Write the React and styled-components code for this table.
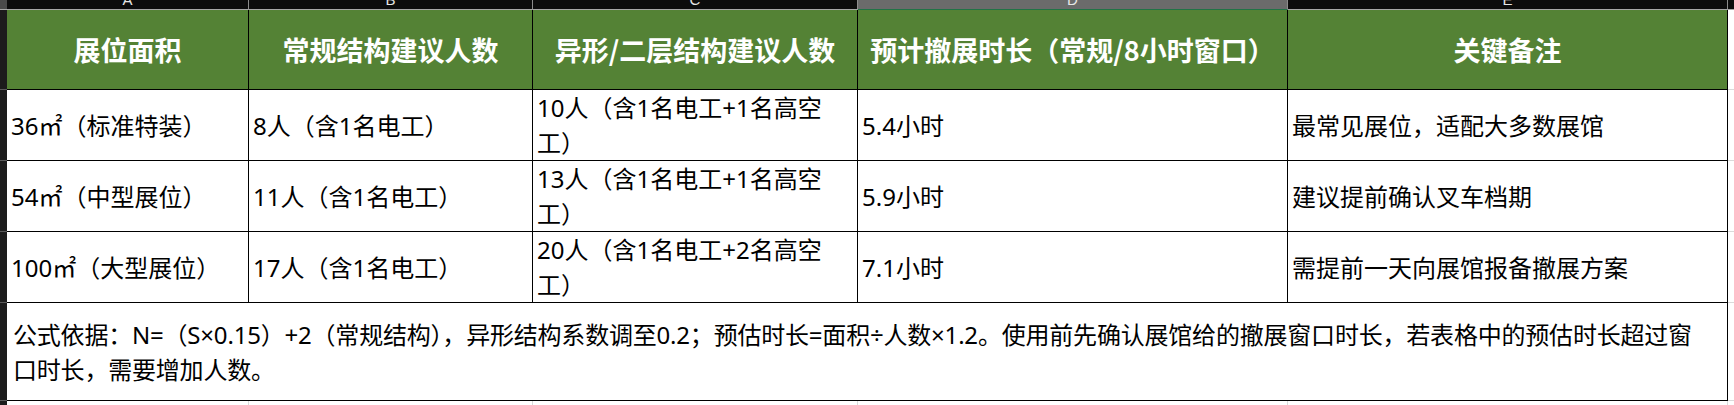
import React from "react";
import styled, { createGlobalStyle } from "styled-components";

const GlobalStyle = createGlobalStyle`
  html, body {
    margin: 0;
    padding: 0;
    background: #ffffff;
  }
  body {
    font-family: "Noto Sans", "Noto Sans CJK SC", sans-serif;
    overflow: hidden;
  }
`;

const COLS = [
  { letter: "A", width: 242 },
  { letter: "B", width: 284 },
  { letter: "C", width: 325 },
  { letter: "D", width: 430, selected: true },
  { letter: "E", width: 440 },
];

const HEADERS = [
  "展位面积",
  "常规结构建议人数",
  "异形/二层结构建议人数",
  "预计撤展时长（常规/8小时窗口）",
  "关键备注",
];

const ROWS = [
  [
    "36㎡（标准特装）",
    "8人（含1名电工）",
    "10人（含1名电工+1名高空\n工）",
    "5.4小时",
    "最常见展位，适配大多数展馆",
  ],
  [
    "54㎡（中型展位）",
    "11人（含1名电工）",
    "13人（含1名电工+1名高空\n工）",
    "5.9小时",
    "建议提前确认叉车档期",
  ],
  [
    "100㎡（大型展位）",
    "17人（含1名电工）",
    "20人（含1名电工+2名高空\n工）",
    "7.1小时",
    "需提前一天向展馆报备撤展方案",
  ],
];

const NOTE =
  "公式依据：N=（S×0.15）+2（常规结构），异形结构系数调至0.2；预估时长=面积÷人数×1.2。使用前先确认展馆给的撤展窗口时长，若表格中的预估时长超过窗\n口时长，需要增加人数。";

const Sheet = styled.table`
  border-collapse: separate;
  border-spacing: 0;
  table-layout: fixed;
  width: 1734px;

  td, th {
    box-sizing: border-box;
    padding: 0;
  }
`;

const Corner = styled.th`
  background: #4a4a4a;
  border-bottom: 1px solid #a6a6a6;
`;

const Letter = styled.th`
  background: ${(p) => (p.$selected ? "#6b6b6b" : "#0c0c0c")};
  border-right: 1px solid #8c8c8c;
  border-bottom: 1px solid ${(p) => (p.$selected ? "#217346" : "#a6a6a6")};
`;

const LetterBox = styled.div`
  height: 9px;
  overflow: hidden;
  display: flex;
  align-items: flex-end;
  justify-content: center;
  font-family: "Liberation Sans", Arial, sans-serif;
  font-weight: normal;
  font-size: 15px;
  line-height: 1;
  color: #e6e6e6;

  span {
    display: block;
    margin-bottom: 2px;
  }
`;

const BarFiller = styled.th`
  background: #0c0c0c;
  border-bottom: 1px solid #a6a6a6;
`;

const RowHead = styled.td`
  background: #1c1c1c;
  border-bottom: 1px solid #5c5c5c;
`;

const Row = styled.tr`
  height: ${(p) => p.$height}px;
`;

const HeadCell = styled.th`
  background: #548235;
  color: #ffffff;
  font-family: "Noto Sans CJK SC", sans-serif;
  font-weight: 700;
  font-size: 27px;
  line-height: 34px;
  text-align: center;
  vertical-align: middle;
  white-space: nowrap;
  overflow: hidden;
  border-right: 1px solid #000;
  border-bottom: 1px solid #000;
`;

const Cell = styled.td`
  color: #000;
  font-size: 24px;
  line-height: 35px;
  vertical-align: middle;
  text-align: left;
  white-space: pre;
  overflow: hidden;
  border-right: 1px solid #000;
  border-bottom: 1px solid #000;
  padding: 0 2px 0 ${(p) => (p.$note ? 6 : 4)}px !important;
  letter-spacing: ${(p) => (p.$note ? "-0.2px" : "0")};
`;

const EmptyCell = styled.td`
  border-right: 1px solid #dadada;
`;

const Filler = styled.td`
  border-bottom: 1px solid #dadada;
`;

export default function App() {
  return (
    <>
      <GlobalStyle />
      <Sheet>
        <colgroup>
          <col style={{ width: 7 }} />
          {COLS.map((c) => (
            <col key={c.letter} style={{ width: c.width }} />
          ))}
          <col />
        </colgroup>
        <thead>
          <Row $height={10}>
            <Corner />
            {COLS.map((c) => (
              <Letter key={c.letter} $selected={c.selected}>
                <LetterBox>
                  <span>{c.letter}</span>
                </LetterBox>
              </Letter>
            ))}
            <BarFiller />
          </Row>
        </thead>
        <tbody>
          <Row $height={80}>
            <RowHead />
            {HEADERS.map((h) => (
              <HeadCell key={h}>{h}</HeadCell>
            ))}
            <Filler />
          </Row>
          {ROWS.map((row, i) => (
            <Row key={i} $height={70}>
              <RowHead />
              {row.map((v, j) => (
                <Cell key={j}>{v}</Cell>
              ))}
              <Filler />
            </Row>
          ))}
          <Row $height={98}>
            <RowHead />
            <Cell colSpan={5} $note>
              {NOTE}
            </Cell>
            <Filler />
          </Row>
          <Row $height={40}>
            <RowHead />
            {COLS.map((c) => (
              <EmptyCell key={c.letter} />
            ))}
            <td />
          </Row>
        </tbody>
      </Sheet>
    </>
  );
}
